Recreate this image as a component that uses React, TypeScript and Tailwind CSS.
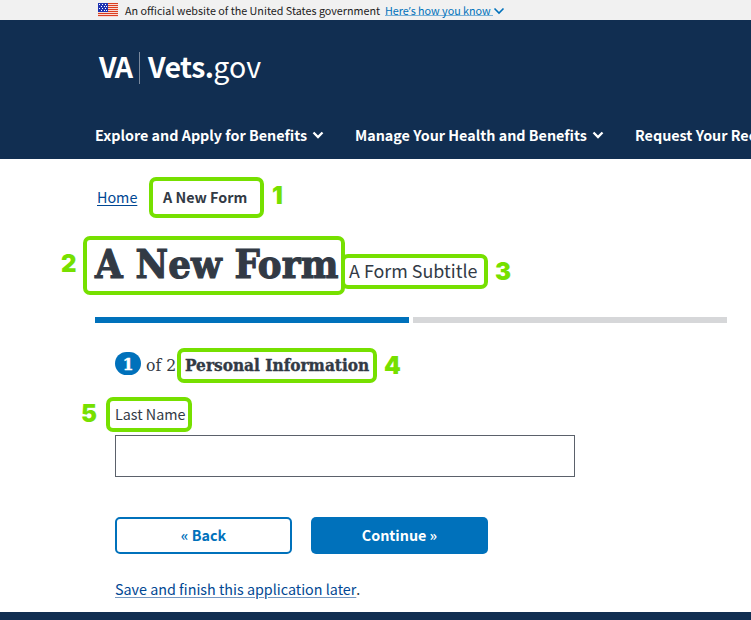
import React from "react";

const sans = "font-['Noto_Sans_CJK_SC','Noto_Sans',sans-serif]";
const serif = "font-['DejaVu_Serif_Condensed','DejaVu_Serif',serif]";

function Chevron({ className, width = 2 }: { className: string; width?: number }) {
  return (
    <svg viewBox="0 0 12 8" className={`shrink-0 ${className}`} fill="none" stroke="currentColor" strokeWidth={width}>
      <path d="M1.5 1.5 L6 6 L10.5 1.5" />
    </svg>
  );
}

function Flag() {
  return (
    <svg viewBox="0 0 20 14" className="mt-[3px] h-[14px] w-5 shrink-0">
      <rect width="20" height="14" fill="#fff" />
      {[0, 2, 4, 6, 8, 10, 12].map((y) => (
        <rect key={y} y={y} width="20" height="1.2" fill="#db3e1f" />
      ))}
      <rect width="10" height="9" fill="#1e33b1" />
      {[2, 6].map((y) =>
        [1, 4, 7].map((x) => <rect key={`${x}-${y}`} x={x} y={y - 1} width="1" height="1" fill="#fff" />)
      )}
      {[3, 7].map((y) =>
        [3, 6, 8].map((x) => <rect key={`${x}-${y}`} x={x} y={y} width="1" height="1" fill="#fff" />)
      )}
    </svg>
  );
}

function Callout({ box, label, number }: { box: string; label: string; number: string }) {
  return (
    <>
      <div className={`absolute rounded-[7px] border-4 border-[#76e000] ${box}`} />
      <div className={`absolute font-['Inter',sans-serif] text-[24px] leading-6 font-black text-[#76e000] ${label}`}>
        {number}
      </div>
    </>
  );
}

export default function App() {
  return (
    <div className={`relative flex h-[620px] w-[751px] flex-col overflow-hidden bg-white whitespace-nowrap text-[#323a45] ${sans}`}>
      <div className="flex h-5 shrink-0 bg-[#f1f1f1] pl-[98px] text-[10.75px] leading-[22px] text-[#212121]">
        <Flag />
        <span className="ml-[7px] w-[260px]">An official website of the United States government</span>
        <a className="flex text-[#0071bb]">
          <span className="mt-[5px] h-[11px] w-[108px] border-b border-[#79b2d8] leading-[12px]">
            Here<span className="font-['Open_Sans',sans-serif]">’</span>s how you know
          </span>
          <Chevron className="mt-[7px] h-[8px] w-[12px]" width={1.6} />
        </a>
      </div>

      <header className="flex h-[139px] shrink-0 flex-col bg-[#112e51] text-white">
        <div className="mt-[32px] flex h-8 pl-[99px] text-[28.5px] leading-[28px]">
          <span className="w-[40px] font-bold tracking-[-1.3px]">VA</span>
          <span className="mr-[8px] w-px bg-[#7a899d]" />
          <span className="font-bold tracking-[-0.6px]">Vets.</span>
          <span>gov</span>
        </div>
        <nav className="mt-[39px] flex h-6 pl-[95px] text-[14.33px] leading-6 font-bold">
          <div className="flex w-[260px] shrink-0">
            <span>Explore and Apply for Benefits</span>
            <Chevron className="mt-[8px] ml-[5px] h-[8px] w-[12px]" width={2.3} />
          </div>
          <div className="flex w-[280px] shrink-0">
            <span>Manage Your Health and Benefits</span>
            <Chevron className="mt-[8px] ml-[5px] h-[8px] w-[12px]" width={2.3} />
          </div>
          <span>Request Your Records</span>
        </nav>
      </header>

      <main className="flex grow flex-col pl-[95px]">
        <div className="mt-[26px] flex h-6 pl-[2px] text-[14.33px] leading-6">
          <a className="w-[66px] text-[#004793] underline underline-offset-2">Home</a>
          <b>A New Form</b>
        </div>
        <div className="mt-[27px] flex h-[59px] items-baseline">
          <h1 className={`w-[254px] text-[39.6px] leading-[57px] font-bold tracking-[0.2px] [-webkit-text-stroke:1.1px_#323a45] ${serif}`}>A New Form</h1>
          <span className="text-[17.9px] leading-6">A Form Subtitle</span>
        </div>
        <div className="mt-[22px] flex h-[6px] gap-1">
          <div className="w-[314px] bg-[#0071bb]" />
          <div className="w-[314px] bg-[#d6d7d9]" />
        </div>
        <section className="flex flex-col pl-5">
          <div className={`mt-[29px] flex h-6 text-[17px] leading-[26px] ${serif}`}>
            <span className="mr-[5px] flex h-[23px] w-[26px] justify-center rounded-[13px] bg-[#0071bb] leading-[25px] font-bold text-white [-webkit-text-stroke:0.4px_white]">1</span>
            <span className="w-[39px] text-[17.4px]">of 2</span>
            <b className="text-[17.1px] [-webkit-text-stroke:0.35px_#323a45]">Personal Information</b>
          </div>
          <label className="mt-[26px] h-6 text-[14.33px] leading-6">Last Name</label>
          <input className="mt-[9px] h-[42px] w-[460px] border border-[#5b616b] bg-white" />
          <div className="mt-[40px] flex h-[37px] gap-[19px] text-[14.33px] leading-[32px] font-bold">
            <button className="w-[177px] rounded-[5px] border-2 border-[#0071bb] pb-px text-[#0071bb]">« Back</button>
            <button className="w-[177px] rounded-[5px] bg-[#0071bb] pb-px text-white">Continue »</button>
          </div>
          <div className="mt-[23px] flex h-6 text-[14.33px] leading-6">
            <a className="text-[#004793] underline decoration-[#7699c2] underline-offset-2">Save and finish this application later</a>.
          </div>
        </section>
      </main>
      <footer className="h-2 shrink-0 bg-[#112e51]" />

      <Callout number="1" box="left-[149px] top-[177px] h-[41px] w-[115px]" label="left-[272px] top-[184px]" />
      <Callout number="2" box="left-[83px] top-[236px] h-[59px] w-[262px]" label="left-[61px] top-[252px]" />
      <Callout number="3" box="left-[341px] top-[254px] h-[35px] w-[147px]" label="left-[495px] top-[260px]" />
      <Callout number="4" box="left-[177px] top-[348px] h-[35px] w-[200px]" label="left-[384px] top-[354px]" />
      <Callout number="5" box="left-[106px] top-[397px] h-[35px] w-[86px]" label="left-[81px] top-[402px]" />
    </div>
  );
}
